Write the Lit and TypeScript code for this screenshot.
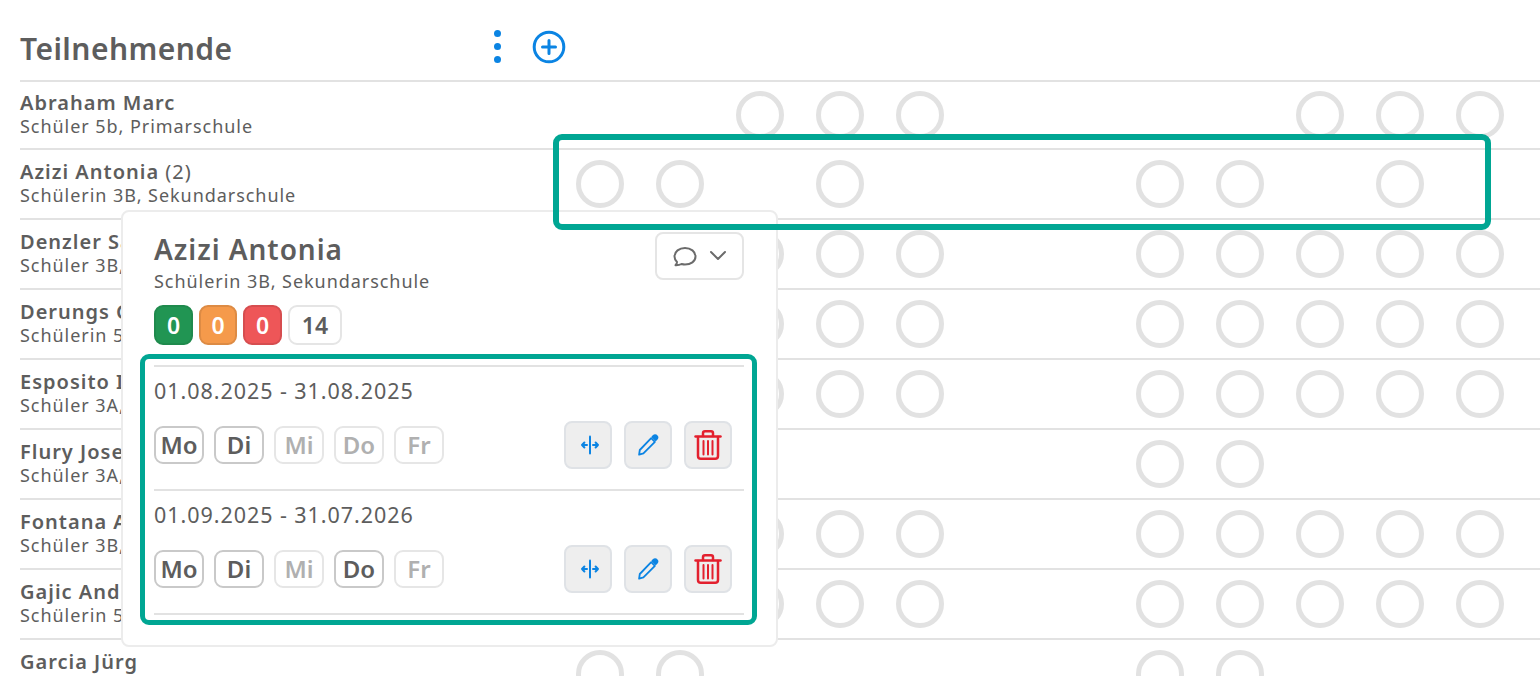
import { html, css, LitElement, svg } from 'lit';
import { customElement } from 'lit/decorators.js';

const FULL = [0, 1, 2, 3, 4, 7, 8, 9, 10, 11];
const SHORT = [0, 1, 7, 8];

const people = [
  { name: 'Abraham Marc', role: 'Schüler 5b, Primarschule', cells: [2, 3, 4, 9, 10, 11] },
  { name: 'Azizi Antonia', extra: '(2)', role: 'Schülerin 3B, Sekundarschule', cells: [0, 1, 3, 7, 8, 10] },
  { name: 'Denzler Sarah', role: 'Schüler 3B, Sekundarschule', cells: FULL },
  { name: 'Derungs Gian', role: 'Schülerin 5a, Primarschule', cells: FULL },
  { name: 'Esposito Ines', role: 'Schüler 3A, Sekundarschule', cells: FULL },
  { name: 'Flury Josef', role: 'Schüler 3A, Sekundarschule', cells: SHORT },
  { name: 'Fontana Alex', role: 'Schüler 3B, Sekundarschule', cells: FULL },
  { name: 'Gajic Andrej', role: 'Schülerin 5a, Primarschule', cells: FULL },
  { name: 'Garcia Jürg', role: 'Schüler 3B, Sekundarschule', cells: SHORT },
];

const periods = [
  { range: '01.08.2025 - 31.08.2025', on: ['Mo', 'Di'] },
  { range: '01.09.2025 - 31.07.2026', on: ['Mo', 'Di', 'Do'] },
];

const DAYS = ['Mo', 'Di', 'Mi', 'Do', 'Fr'];

const splitIcon = svg`<svg class="split" width="20" height="20" viewBox="0 0 20 20" fill="none" stroke="#0b84e3" stroke-width="2" stroke-linecap="round" stroke-linejoin="round">
  <path d="M10 1.500v17" /><path d="M7 10H2M4.400 7.500 2 10l2.400 2.500" /><path d="M13 10h5M15.600 7.500 18 10l-2.400 2.500" /></svg>`;

const penIcon = svg`<svg width="24" height="24" viewBox="0 0 24 24" fill="none" stroke="#0b84e3" stroke-width="1.800" stroke-linejoin="round" stroke-linecap="round">
  <path d="M3.800 17 15.200 5.200l3.700 3.600L7.400 20.400l-4.300 1.300z" /><path fill="#0b84e3" d="m16.400 3.800 1-1c1-.9 2.500-.9 3.300 0 .9.900.9 2.300 0 3.300l-1 1z" /></svg>`;

const trashIcon = svg`<svg width="28" height="32" viewBox="0 0 28 32" fill="none" stroke="#e3202e" stroke-width="2.500" stroke-linejoin="round" stroke-linecap="round">
  <path d="M1.500 7.500h25" /><path d="M9 7V4.200C9 3 9.800 2.200 11 2.200h6C18.200 2.200 19 3 19 4.200V7" />
  <path d="M4 8v19c0 1.800 1 2.800 2.800 2.800h14.400c1.800 0 2.800-1 2.800-2.800V8" />
  <path stroke-width="2" d="M9.500 12v13.500M14 12v13.500M18.500 12v13.500" /></svg>`;

@customElement('app-root')
export class AppRoot extends LitElement {
  static styles = css`
    :host {
      display: block;
      position: relative;
      height: 676px;
      overflow: hidden;
      background: #fff;
      color: #5d5d5d;
      font-family: 'Noto Sans', Lato, sans-serif;
    }

    .header {
      display: flex;
      align-items: center;
      height: 80px;
      margin-left: 20px;
      border-bottom: 2px solid #e2e2e2;
    }

    .title {
      flex: 0 0 474px;
      font-size: 30px;
      font-weight: 600;
      letter-spacing: 0.45px;
      padding-top: 16px;
    }

    .dots {
      display: flex;
      flex-direction: column;
      gap: 6px;
      margin-top: 12px;
    }

    .dots span {
      width: 7px;
      height: 7px;
      border-radius: 50%;
      background: #0b84e3;
    }

    .plus {
      display: block;
      margin: 14px 0 0 31px;
    }

    .row {
      display: flex;
      align-items: center;
      height: 70px;
      margin-left: 20px;
      border-bottom: 2px solid #e2e2e2;
      box-sizing: border-box;
    }

    .row.first {
      height: 68px;
    }

    .who {
      flex: 0 0 540px;
      font-size: 18px;
      line-height: 23px;
      letter-spacing: 0.95px;
      white-space: nowrap;
    }

    .who b {
      font-weight: 600;
    }

    .who .line {
      line-height: 24px;
      font-size: 20px;
      letter-spacing: 1px;
      margin-top: -2px;
    }

    .cells {
      display: grid;
      grid-template-columns: repeat(12, 80px);
    }

    .cell {
      display: flex;
      justify-content: center;
    }

    .dot {
      width: 48px;
      height: 48px;
      border: 5px solid #e2e2e2;
      border-radius: 50%;
      box-sizing: border-box;
    }

    .frame-row {
      position: absolute;
      left: 553px;
      top: 134px;
      width: 938px;
      height: 96px;
      border: 6px solid #00a693;
      border-radius: 9px;
      box-sizing: border-box;
      z-index: 3;
      pointer-events: none;
    }

    .popup {
      position: absolute;
      left: 121px;
      top: 210px;
      width: 657px;
      height: 437px;
      padding: 19px 32px 0 31px;
      border: 2px solid #ececec;
      border-radius: 8px;
      background: #fff;
      box-sizing: border-box;
      z-index: 2;
    }

    .popup-head {
      display: flex;
      justify-content: space-between;
      align-items: flex-start;
    }

    .popup-name {
      font-size: 28px;
      line-height: 36px;
      font-weight: 600;
      letter-spacing: 0.95px;
    }

    .popup-role {
      margin-top: 1px;
      font-size: 18px;
      line-height: 26px;
      letter-spacing: 0.95px;
    }

    .comment {
      display: flex;
      align-items: center;
      justify-content: center;
      gap: 12px;
      width: 89px;
      height: 48px;
      margin-top: 1px;
      border: 2px solid #e5e5e5;
      border-radius: 8px;
      box-sizing: border-box;
    }

    .badges {
      display: flex;
      gap: 6px;
      margin-top: 11px;
    }

    .badge {
      display: flex;
      align-items: center;
      justify-content: center;
      width: 39px;
      height: 40px;
      border: 2px solid;
      border-radius: 9px;
      box-sizing: border-box;
      color: #fff;
      font-size: 23px;
      font-weight: 600;
    }

    .badge.green {
      background: #219553;
      border-color: #1f8a4d;
    }

    .badge.orange {
      width: 38px;
      background: #f59a4b;
      border-color: #dd8b44;
    }

    .badge.red {
      background: #ee5658;
      border-color: #d64d4f;
    }

    .badge.plain {
      width: 54px;
      background: #fff;
      border-color: #e5e5e5;
      color: #5d5d5d;
    }

    .periods {
      margin: 9px -13px 0 -14px;
      padding: 6px 8px 5px 9px;
      border: 5px solid #00a693;
      border-radius: 9px;
    }

    .period {
      height: 124px;
      border-top: 2px solid #e2e2e2;
      box-sizing: border-box;
    }

    .period.end {
      height: 0;
    }

    .range {
      padding-top: 11px;
      font-size: 21.500px;
      line-height: 26px;
      letter-spacing: 0.95px;
    }

    .controls {
      display: flex;
      align-items: center;
      justify-content: space-between;
      margin-top: 17px;
      padding-right: 12px;
    }

    .days {
      display: flex;
      gap: 10px;
    }

    .day {
      display: flex;
      align-items: center;
      justify-content: center;
      width: 50px;
      height: 38px;
      border: 2px solid #e6e6e6;
      border-radius: 9px;
      box-sizing: border-box;
      color: #b0b0b0;
      font-size: 24px;
      font-weight: 600;
      padding-bottom: 2px;
    }

    .day.on {
      border-color: #c9c9c9;
      color: #5d5d5d;
    }

    .actions {
      display: flex;
      gap: 12px;
    }

    .action {
      display: flex;
      align-items: center;
      justify-content: center;
      width: 48px;
      height: 48px;
      border: 2px solid #dfe2e6;
      border-radius: 8px;
      background: #eeeeee;
      box-sizing: border-box;
    }

    .split {
      margin-left: 4px;
    }
  `;

  renderRow(p: (typeof people)[number], i: number) {
    return html`
      <div class="row ${i === 0 ? 'first' : ''}">
        <div class="who">
          <div class="line"><b>${p.name}</b>${p.extra ? ` ${p.extra}` : ''}</div>
          <div>${p.role}</div>
        </div>
        <div class="cells">
          ${Array.from({ length: 12 }, (_, c) => html`
            <div class="cell">${p.cells.includes(c) ? html`<div class="dot"></div>` : html``}</div>
          `)}
        </div>
      </div>
    `;
  }

  renderPeriod(p: (typeof periods)[number]) {
    return html`
      <div class="period">
        <div class="range">${p.range}</div>
        <div class="controls">
          <div class="days">
            ${DAYS.map((d) => html`<div class="day ${p.on.includes(d) ? 'on' : ''}">${d}</div>`)}
          </div>
          <div class="actions">
            <div class="action">${splitIcon}</div>
            <div class="action">${penIcon}</div>
            <div class="action">${trashIcon}</div>
          </div>
        </div>
      </div>
    `;
  }

  render() {
    return html`
      <div class="header">
        <div class="title">Teilnehmende</div>
        <div class="dots"><span></span><span></span><span></span></div>
        <svg class="plus" width="34" height="34" viewBox="0 0 34 34" fill="none" stroke="#0b84e3" stroke-width="3" stroke-linecap="round">
          <circle cx="17" cy="17" r="14.800" />
          <path d="M17 10.500v13M10.500 17h13" />
        </svg>
      </div>
      ${people.map((p, i) => this.renderRow(p, i))}

      <div class="frame-row"></div>

      <div class="popup">
        <div class="popup-head">
          <div>
            <div class="popup-name">Azizi Antonia</div>
            <div class="popup-role">Schülerin 3B, Sekundarschule</div>
          </div>
          <div class="comment">
            <svg width="24" height="22" viewBox="0 0 24 22" fill="none" stroke="#6b6b6b" stroke-width="2" stroke-linejoin="round">
              <path d="M2.500 20.200c.9-1 1.500-2.200 1.500-3.300C2.500 15.500 1.500 13.600 1.500 11.500 1.500 6.500 6.200 3 12 3s10.500 3.500 10.500 8.500S17.800 19.500 12 19.500c-1.300 0-2.400-.2-3.500-.5-1.400.8-3.600 1.300-6 1.200z" />
            </svg>
            <svg width="18" height="12" viewBox="0 0 18 12" fill="none" stroke="#6b6b6b" stroke-width="2" stroke-linecap="round" stroke-linejoin="round">
              <path d="m2 2 7 7 7-7" />
            </svg>
          </div>
        </div>
        <div class="badges">
          <div class="badge green">0</div>
          <div class="badge orange">0</div>
          <div class="badge red">0</div>
          <div class="badge plain">14</div>
        </div>
        <div class="periods">
          ${periods.map((p) => this.renderPeriod(p))}
          <div class="period end"></div>
        </div>
      </div>
    `;
  }
}
